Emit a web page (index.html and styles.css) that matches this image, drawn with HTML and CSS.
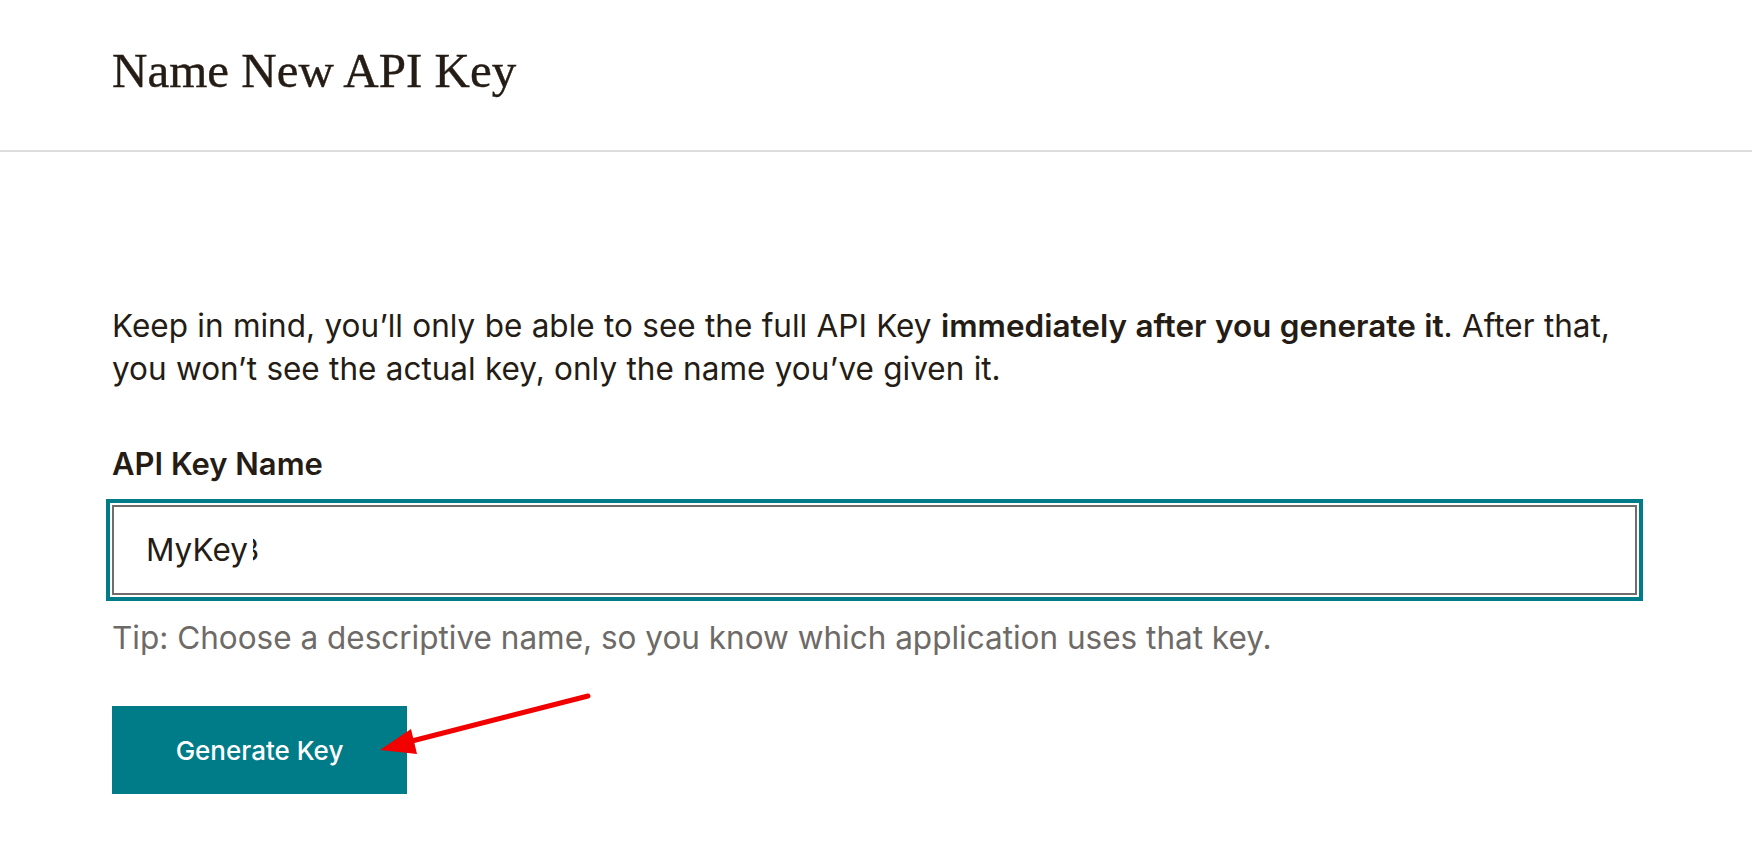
FILE: index.html
```html
<!DOCTYPE html>
<html lang="en">
<head>
<meta charset="utf-8">
<title>Name New API Key</title>
<link rel="stylesheet" href="styles.css">
</head>
<body>
<header class="page-header">
  <h1 class="page-title">Name New API Key</h1>
</header>
<main class="content">
  <p class="intro">Keep in mind, you’ll only be able to see the full API Key <strong>immediately after you generate it</strong>. After that,<br>you won’t see the actual key, only the name you’ve given it.</p>
  <label class="field-label" for="key-name">API Key Name</label>
  <div class="field-input" id="key-name"><span class="field-value">MyKey</span><span class="cut"><span class="cut-inner">3</span></span></div>
  <p class="tip">Tip: Choose a descriptive name, so you know which application uses that key.</p>
  <button class="btn-primary" type="button">Generate Key</button>
</main>
<svg class="annot-arrow" width="1752" height="846" viewBox="0 0 1752 846" aria-hidden="true">
  <line x1="588" y1="696" x2="408" y2="742" stroke="#f20000" stroke-width="5" stroke-linecap="round"/>
  <polygon points="380,750 411,729 417,754" fill="#f20000"/>
</svg>
</body>
</html>
```
FILE: styles.css
```css
html, body {
  margin: 0;
  padding: 0;
  background: #ffffff;
}
body {
  position: relative;
  width: 1752px;
  height: 846px;
  overflow: hidden;
  color: #241c15;
  font-family: Inter, "Liberation Sans", Arial, sans-serif;
}
.page-header {
  padding: 41px 0 49px 112px;
  border-bottom: 2px solid #dcdcdc;
}
.page-title {
  margin: 0;
  font-family: "Liberation Serif", "Times New Roman", serif;
  font-weight: 400;
  font-size: 49px;
  line-height: 60px;
  color: #241c15;
  -webkit-text-stroke: 0.4px #241c15;
}
.content {
  padding: 152px 0 0 112px;
  display: flex;
  flex-direction: column;
  align-items: flex-start;
}
.intro {
  margin: 0;
  font-size: 31.5px;
  line-height: 43px;
  word-spacing: 0.5px;
  color: #241c15;
}
.intro strong {
  font-weight: 600;
}
.field-label {
  margin-top: 56px;
  font-size: 31px;
  line-height: 36px;
  font-weight: 600;
}
.field-input {
  box-sizing: border-box;
  margin-top: 23px;
  width: 1525px;
  height: 90px;
  border: 2px solid #6f6c6a;
  padding: 0 0 0 32px;
  display: flex;
  align-items: center;
  font-size: 31.5px;
  line-height: 36px;
  color: #241c15;
  outline: 4px solid #007c89;
  outline-offset: 2px;
}
.cut {
  display: inline-block;
  width: 5px;
  height: 36px;
  margin-left: 5px;
  overflow: hidden;
}
.cut-inner {
  display: inline-block;
  margin-left: -13px;
}
.tip {
  margin: 21px 0 0;
  font-size: 31.5px;
  line-height: 43px;
  color: #6e6a67;
}
.btn-primary {
  margin-top: 47px;
  width: 295px;
  height: 88px;
  border: 0;
  background: #007c89;
  color: #ffffff;
  font-family: Inter, "Liberation Sans", Arial, sans-serif;
  font-size: 26px;
  font-weight: 500;
  padding: 0;
}
.annot-arrow {
  position: absolute;
  left: 0;
  top: 0;
  pointer-events: none;
}
```
